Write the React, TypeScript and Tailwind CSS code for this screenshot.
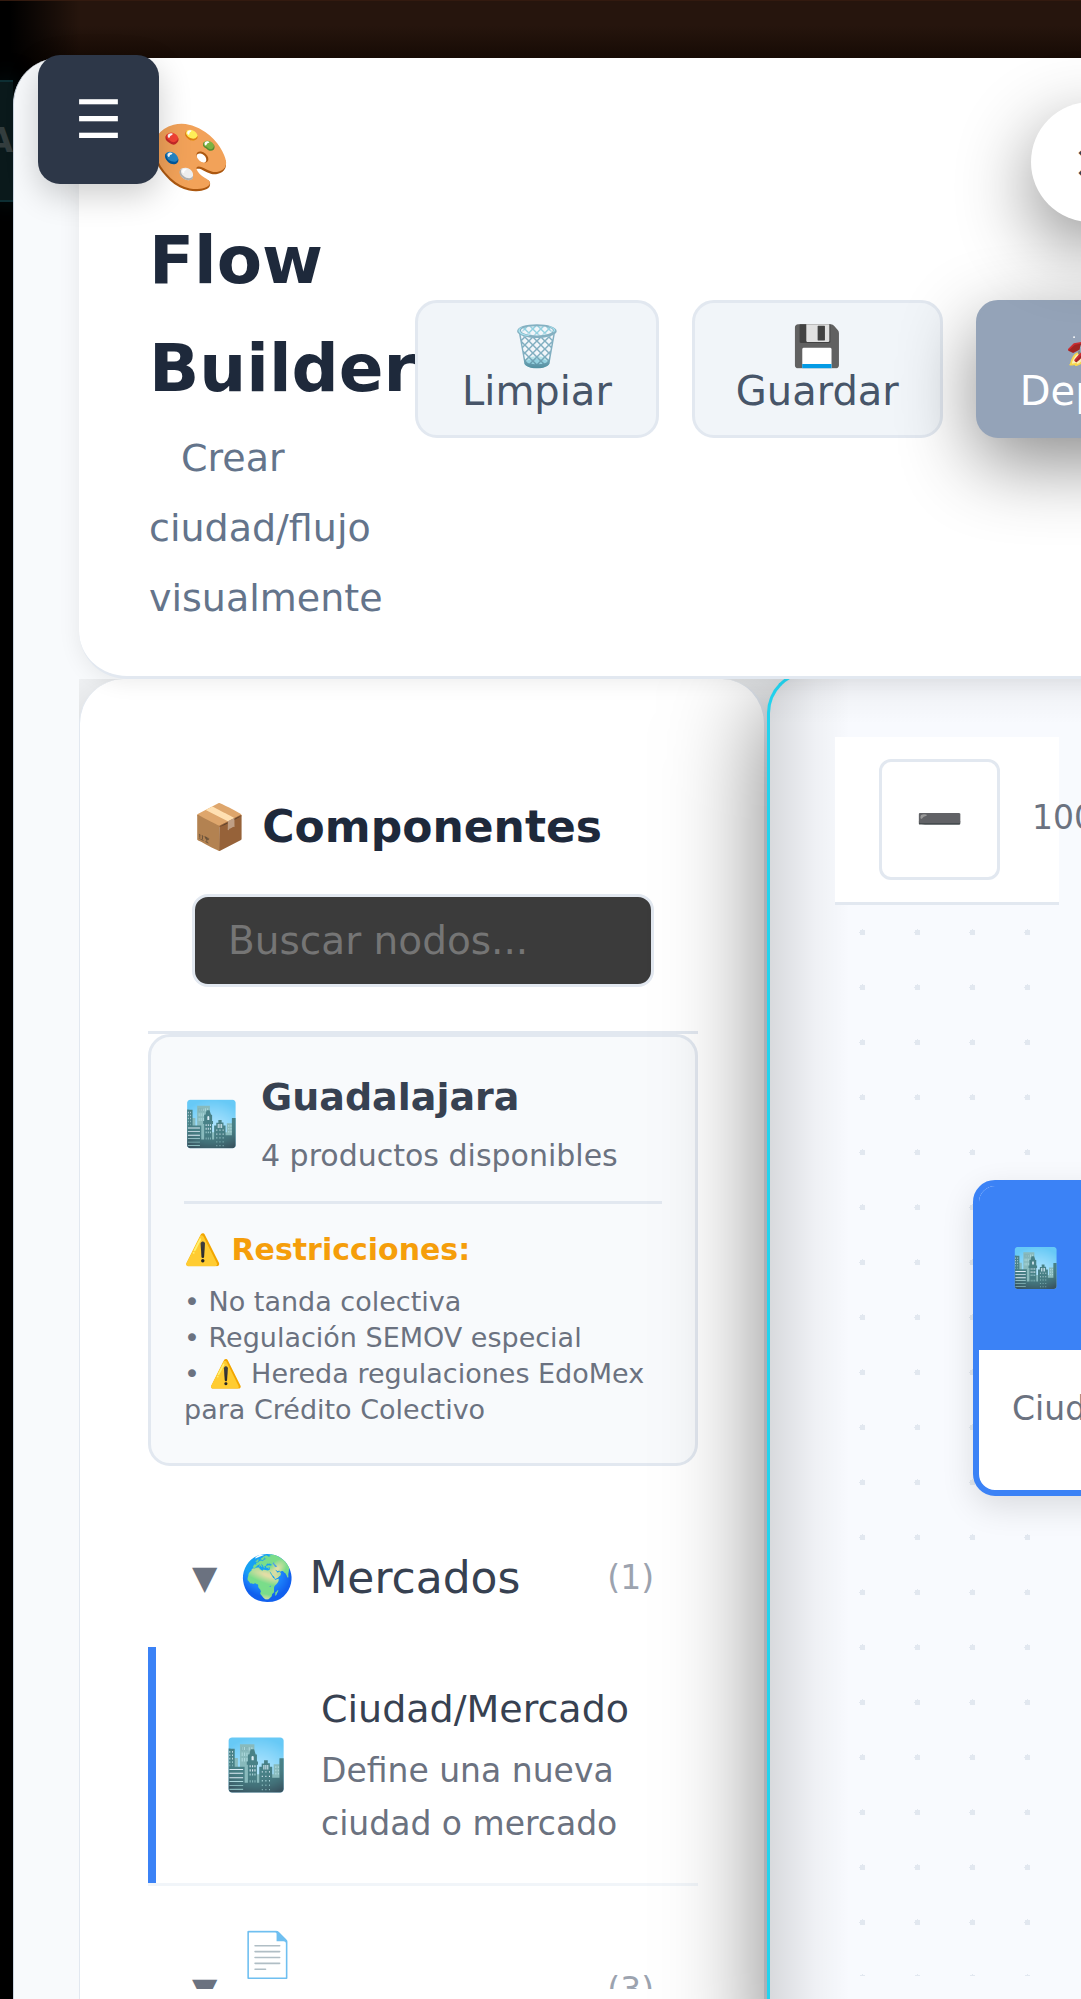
import type { ReactNode } from "react";

function ActionButton({
  icon,
  label,
  variant = "plain",
}: {
  icon: string;
  label: string;
  variant?: "plain" | "wide" | "primary";
}) {
  const look = {
    plain: "border-[#e2e8f0] bg-[#f1f5f9] px-[41px] text-[#475569]",
    wide: "border-[#e2e8f0] bg-[#f1f5f9] px-11 text-[#475569]",
    primary: "border-[#94a3b8] bg-[#94a3b8] px-[41px] text-white shadow-[0_25px_75px_rgba(0,0,0,0.45)]",
  }[variant];
  return (
    <button
      type="button"
      className={`flex shrink-0 flex-col items-center rounded-[22px] border-[3px] py-[21px] text-[40px] leading-[45px] ${look}`}
    >
      <span>{icon}</span>
      <span>{label}</span>
    </button>
  );
}

function CategoryRow({ title, count }: { title: ReactNode; count: number }) {
  return (
    <button type="button" className="flex w-full items-center px-11 py-[34px] text-left">
      <span className="mr-[23px] text-[33px] leading-[52px] text-[#6b7280]">▼</span>
      <span className="min-w-0 flex-1 text-[44px] leading-[70px] text-[#374151]">{title}</span>
      <span className="text-[33px] leading-[52px] text-[#9ca3af]">({count})</span>
    </button>
  );
}

function Sidebar() {
  return (
    <aside className="flex w-[688px] shrink-0 flex-col rounded-t-[45px] border-r-[3px] border-l border-[#e2e8f0] bg-white pt-[69px] pr-[66px] pb-[10px] pl-[68px] shadow-[0_25px_100px_rgba(0,0,0,0.3)]">
      <div className="shrink-0 border-b-[3px] border-[#e2e8f0] px-11 py-11">
        <h3 className="mb-8 text-[44px] leading-[70px] font-bold text-[#1e293b]">📦 Componentes</h3>
        <input
          type="text"
          aria-label="Buscar nodos"
          placeholder="Buscar nodos..."
          className="block h-[93px] w-full rounded-2xl border-[3px] border-[#e2e8f0] bg-[#3b3b3b] px-[33px] text-[39px] text-white placeholder:text-[#757575]"
        />
      </div>
      <div className="min-h-0 flex-1 overflow-hidden">
        <section className="rounded-[22px] border-[3px] border-[#e2e8f0] bg-[#f8fafc] px-[33px] pt-[30px] pb-[35px]">
          <div className="flex items-center gap-[22px] border-b-[3px] border-[#e2e8f0] pb-[21px]">
            <span className="text-[44px] leading-[70px]">🏙️</span>
            <div>
              <h4 className="text-[38px] leading-[61px] font-bold text-[#374151]">Guadalajara</h4>
              <p className="mt-1 text-[30px] leading-[48px] text-[#6b7280]">4 productos disponibles</p>
            </div>
          </div>
          <p className="mt-[22px] mb-[10px] text-[30px] leading-[48px] font-bold text-[#f59e0b]">⚠️ Restricciones:</p>
          <ul className="text-[27px] leading-9 text-[#6b7280]">
            <li>• No tanda colectiva</li>
            <li>• Regulación SEMOV especial</li>
            <li>• ⚠️ Hereda regulaciones EdoMex para Crédito Colectivo</li>
          </ul>
        </section>
        <div className="mt-[43px]">
          <CategoryRow title="🌍 Mercados" count={1} />
          <div className="border-b-[3px] border-[#f1f5f9]">
            <div className="flex items-center gap-[34px] border-l-8 border-[#3b82f6] py-[33px] pl-[69px]">
              <span className="text-[50px] leading-[80px]">🏙️</span>
              <div>
                <h4 className="mb-1.5 text-[38px] leading-[58px] text-[#374151]">Ciudad/Mercado</h4>
                <p className="text-[33px] leading-[53px] text-[#6b7280]">Define una nueva ciudad o mercado</p>
              </div>
            </div>
          </div>
          <CategoryRow title="📄 Documentación" count={3} />
        </div>
      </div>
    </aside>
  );
}

function Canvas() {
  return (
    <main className="-mt-2 -mb-[60px] flex min-w-0 flex-1 flex-col rounded-tl-[42px] border-t-[3px] border-l-[3px] border-[#22d3ee] bg-[#f8fafe] bg-[linear-gradient(to_right,rgba(0,0,0,0.13),rgba(0,0,0,0.04)_45px,transparent_80px),linear-gradient(to_bottom,rgba(0,0,0,0.05),transparent_50px)] pt-[63px] pr-[68px] pl-[65px] shadow-[0_25px_100px_rgba(0,0,0,0.5)]">
      <div className="flex shrink-0 items-center border-b-[3px] border-[#e2e8f0] bg-white py-[22px] pl-11">
        <button
          type="button"
          aria-label="Alejar"
          className="h-[121px] w-[121px] shrink-0 rounded-xl border-[3px] border-[#e2e8f0] bg-white text-[38px] leading-[45px] text-[#374151]"
        >
          ➖
        </button>
        <span className="ml-8 pb-1 text-[33px] leading-[52px] text-[#6b7280]">100%</span>
      </div>
      <div className="relative mb-[83px] min-h-0 flex-1 bg-[radial-gradient(circle,#e2e8f0_3px,transparent_3px)] bg-[size:55px_55px]">
        <div className="absolute top-[275px] left-[138px] w-[600px] overflow-hidden rounded-[22px] border-[6px] border-[#3b82f6] bg-white shadow-[0_11px_33px_rgba(0,0,0,0.12)]">
          <div className="flex gap-[33px] bg-[#3b82f6] px-[33px] py-[46px] text-[38px] leading-[72px] text-white">
            <span>🏙️</span>
            <span>Ciudad/Mercado</span>
          </div>
          <div className="px-[33px] pt-8 pb-[55px] text-[33px] leading-[53px] text-[#6b7280]">Ciudad o mercado</div>
        </div>
      </div>
    </main>
  );
}

export default function App() {
  return (
    <div className="relative h-screen overflow-hidden bg-black font-['DejaVu_Sans',sans-serif]">
      <div className="absolute inset-x-0 top-0 h-[104px] border-t border-[#331a0f] bg-[linear-gradient(to_right,#000_10px,transparent_80px),linear-gradient(to_bottom,#26150d_25px,#150a04_60px,#000_80px)]" />
      <div className="absolute top-20 left-0 flex h-[122px] w-[13px] items-center justify-end overflow-hidden border-y-2 border-[#0d2e33] bg-[#0a191b] shadow-[0_0_25px_#0a2226]">
        <span className="text-[33px] font-bold text-[#333d3e]">A</span>
      </div>

      <div className="relative -mr-[46px] flex h-full flex-col pt-[58px] pl-[13px]">
        <div className="flex min-h-0 flex-1 flex-col overflow-hidden rounded-tl-[46px] border-l border-[#cbd5e1] bg-[#f8fafc] pl-[65px]">
          <header className="z-10 flex shrink-0 items-center rounded-bl-[48px] border-b-[3px] border-[#e2e8f0] bg-white px-[70px] pt-[46px] pb-[43px] shadow-[0_3px_22px_rgba(0,0,0,0.08)]">
            <div className="w-[266px] shrink-0">
              <h2 className="text-[66px] leading-[108px] font-bold text-[#1e293b]">
                <span className="block h-[103px]">🎨</span>
                Flow Builder
              </h2>
              <p className="text-[38px] leading-[70px] text-[#64748b]">
                <span className="ml-8">Crear</span> ciudad/flujo visualmente
              </p>
            </div>
            <div className="flex gap-[33px]">
              <ActionButton icon="🗑️" label="Limpiar" variant="wide" />
              <ActionButton icon="💾" label="Guardar" />
              <ActionButton icon="🚀" label="Deploy" variant="primary" />
            </div>
          </header>
          <div className="flex min-h-0 flex-1 overflow-hidden">
            <Sidebar />
            <Canvas />
          </div>
        </div>
      </div>

      <button
        type="button"
        aria-label="Abrir menú"
        className="absolute top-[55px] left-[38px] z-20 h-[129px] w-[121px] rounded-[22px] bg-[#2d3748] text-[53px] leading-[80px] text-white shadow-[0_11px_33px_rgba(0,0,0,0.2)]"
      >
        ☰
      </button>
      <button
        type="button"
        aria-label="Cerrar"
        className="absolute top-[102px] -right-[70px] z-20 h-[120px] w-[120px] rounded-full bg-white text-[44px] text-[#374151] shadow-[0_25px_75px_rgba(0,0,0,0.45)]"
      >
        ×
      </button>
    </div>
  );
}
